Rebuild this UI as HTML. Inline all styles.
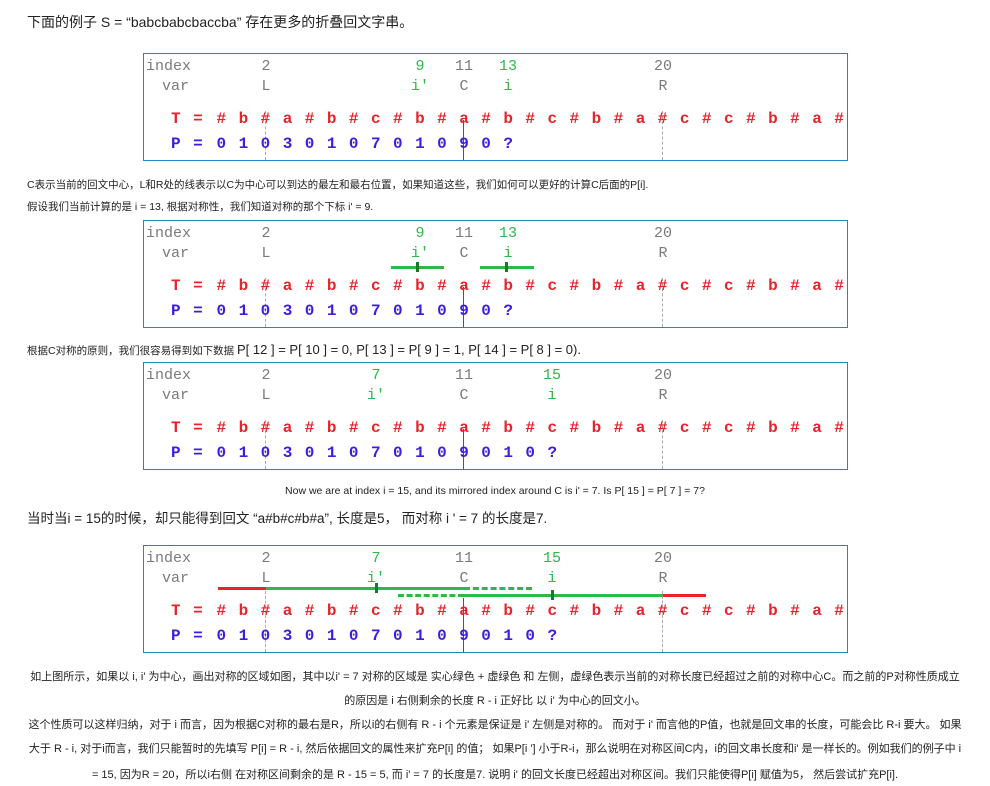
<!DOCTYPE html>
<html><head><meta charset="utf-8">
<style>
body{margin:0;background:#fff;width:990px;height:786px;position:relative;overflow:hidden;font-family:"Liberation Sans","Noto Sans CJK SC",sans-serif;color:#222}
.t{position:absolute;white-space:nowrap}
.box{position:absolute;left:143px;width:703px;height:106px;border:1px solid #1a8ac6}
.box span{position:absolute;white-space:nowrap}
.lab{font-family:"Liberation Mono",monospace;font-size:15px;color:#7a7a7a;line-height:20px}
.n{transform:translateX(-50%)}
.g{color:#2db84a}
.row{font-family:"Liberation Mono",monospace;font-weight:bold;font-size:16px;letter-spacing:1.43px;line-height:20px}
.T{color:#e8232a}.P{color:#3a1fe0}
.v{position:absolute;width:0}
.dash{border-left:1.5px dashed #aaa}
.sol{border-left:1px solid #555}
.ln{position:absolute;height:3px}
.sm{font-size:10.5px}
.bp{font-size:11px}
</style></head><body>

<div class="t" style="left:27px;top:12px;font-size:14px">下面的例子 S = “babcbabcbaccba” 存在更多的折叠回文字串。</div>

<!-- box 1 -->
<div class="box" style="top:53px">
<span class="lab" style="left:2px;top:3px">index</span>
<span class="lab" style="left:18px;top:23px">var</span>
<span class="lab n" style="left:122px;top:3px">2</span><span class="lab n" style="left:122px;top:23px">L</span>
<span class="lab n g" style="left:276px;top:3px">9</span><span class="lab n g" style="left:276px;top:23px">i'</span>
<span class="lab n" style="left:320px;top:3px">11</span><span class="lab n" style="left:320px;top:23px">C</span>
<span class="lab n g" style="left:364px;top:3px">13</span><span class="lab n g" style="left:364px;top:23px">i</span>
<span class="lab n" style="left:519px;top:3px">20</span><span class="lab n" style="left:519px;top:23px">R</span>
<div class="v dash" style="left:121px;top:57px;height:49px"></div>
<div class="v sol" style="left:319px;top:66px;height:40px"></div>
<div class="v dash" style="left:518px;top:57px;height:49px"></div>
<span class="row T" style="left:27px;top:55px">T =</span>
<span class="row T" style="left:72.5px;top:55px"># b # a # b # c # b # a # b # c # b # a # c # c # b # a #</span>
<span class="row P" style="left:27px;top:80px">P =</span>
<span class="row P" style="left:72.5px;top:80px">0 1 0 3 0 1 0 7 0 1 0 9 0 ?</span>
</div>

<div class="t sm" style="left:27px;top:177px">C表示当前的回文中心，L和R处的线表示以C为中心可以到达的最左和最右位置，如果知道这些，我们如何可以更好的计算C后面的P[i].</div>
<div class="t sm" style="left:27px;top:199px">假设我们当前计算的是 i = 13, 根据对称性，我们知道对称的那个下标 i' = 9.</div>

<!-- box 2 -->
<div class="box" style="top:220px">
<span class="lab" style="left:2px;top:3px">index</span>
<span class="lab" style="left:18px;top:23px">var</span>
<span class="lab n" style="left:122px;top:3px">2</span><span class="lab n" style="left:122px;top:23px">L</span>
<span class="lab n g" style="left:276px;top:3px">9</span><span class="lab n g" style="left:276px;top:23px">i'</span>
<span class="lab n" style="left:320px;top:3px">11</span><span class="lab n" style="left:320px;top:23px">C</span>
<span class="lab n g" style="left:364px;top:3px">13</span><span class="lab n g" style="left:364px;top:23px">i</span>
<span class="lab n" style="left:519px;top:3px">20</span><span class="lab n" style="left:519px;top:23px">R</span>
<div class="ln" style="left:247px;top:45px;width:53px;background:#2db84a"></div>
<div class="ln" style="left:272px;top:41px;width:3px;height:10px;background:#157a2a"></div>
<div class="ln" style="left:336px;top:45px;width:54px;background:#2db84a"></div>
<div class="ln" style="left:361px;top:41px;width:3px;height:10px;background:#157a2a"></div>
<div class="v dash" style="left:121px;top:57px;height:49px"></div>
<div class="v sol" style="left:319px;top:66px;height:40px"></div>
<div class="v dash" style="left:518px;top:57px;height:49px"></div>
<span class="row T" style="left:27px;top:55px">T =</span>
<span class="row T" style="left:72.5px;top:55px"># b # a # b # c # b # a # b # c # b # a # c # c # b # a #</span>
<span class="row P" style="left:27px;top:80px">P =</span>
<span class="row P" style="left:72.5px;top:80px">0 1 0 3 0 1 0 7 0 1 0 9 0 ?</span>
</div>

<div class="t" style="left:27px;top:342px;font-size:10.5px">根据C对称的原则，我们很容易得到如下数据 <span style="font-size:13px">P[ 12 ] = P[ 10 ] = 0, P[ 13 ] = P[ 9 ] = 1, P[ 14 ] = P[ 8 ] = 0).</span></div>

<!-- box 3 -->
<div class="box" style="top:362px">
<span class="lab" style="left:2px;top:3px">index</span>
<span class="lab" style="left:18px;top:23px">var</span>
<span class="lab n" style="left:122px;top:3px">2</span><span class="lab n" style="left:122px;top:23px">L</span>
<span class="lab n g" style="left:232px;top:3px">7</span><span class="lab n g" style="left:232px;top:23px">i'</span>
<span class="lab n" style="left:320px;top:3px">11</span><span class="lab n" style="left:320px;top:23px">C</span>
<span class="lab n g" style="left:408px;top:3px">15</span><span class="lab n g" style="left:408px;top:23px">i</span>
<span class="lab n" style="left:519px;top:3px">20</span><span class="lab n" style="left:519px;top:23px">R</span>
<div class="v dash" style="left:121px;top:57px;height:49px"></div>
<div class="v sol" style="left:319px;top:66px;height:40px"></div>
<div class="v dash" style="left:518px;top:57px;height:49px"></div>
<span class="row T" style="left:27px;top:55px">T =</span>
<span class="row T" style="left:72.5px;top:55px"># b # a # b # c # b # a # b # c # b # a # c # c # b # a #</span>
<span class="row P" style="left:27px;top:80px">P =</span>
<span class="row P" style="left:72.5px;top:80px">0 1 0 3 0 1 0 7 0 1 0 9 0 1 0 ?</span>
</div>

<div class="t sm" style="left:0;width:990px;text-align:center;top:485px">Now we are at index i = 15, and its mirrored index around C is i' = 7. Is P[ 15 ] = P[ 7 ] = 7?</div>
<div class="t" style="left:27px;top:507px;font-size:13.5px">当时当i = 15的时候，却只能得到回文 “a#b#c#b#a”, 长度是5， 而对称 i ' = 7 的长度是7.</div>

<!-- box 4 -->
<div class="box" style="top:545px">
<span class="lab" style="left:2px;top:3px">index</span>
<span class="lab" style="left:18px;top:23px">var</span>
<span class="lab n" style="left:122px;top:3px">2</span><span class="lab n" style="left:122px;top:23px">L</span>
<span class="lab n g" style="left:232px;top:3px">7</span><span class="lab n g" style="left:232px;top:23px">i'</span>
<span class="lab n" style="left:320px;top:3px">11</span><span class="lab n" style="left:320px;top:23px">C</span>
<span class="lab n g" style="left:408px;top:3px">15</span><span class="lab n g" style="left:408px;top:23px">i</span>
<span class="lab n" style="left:519px;top:3px">20</span><span class="lab n" style="left:519px;top:23px">R</span>
<div class="ln" style="left:74px;top:41px;width:48px;background:#e8232a"></div>
<div class="ln" style="left:122px;top:41px;width:198px;background:#2db84a"></div>
<div class="ln" style="left:231px;top:37px;width:3px;height:10px;background:#157a2a"></div>
<div class="ln" style="left:320px;top:41px;width:68px;height:0;border-top:3px dashed #2db84a"></div>
<div class="ln" style="left:254px;top:48px;width:66px;height:0;border-top:3px dashed #2db84a"></div>
<div class="ln" style="left:320px;top:48px;width:199px;background:#2db84a"></div>
<div class="ln" style="left:407px;top:44px;width:3px;height:10px;background:#157a2a"></div>
<div class="ln" style="left:519px;top:48px;width:43px;background:#e8232a"></div>
<div class="v dash" style="left:121px;top:45px;height:61px"></div>
<div class="v sol" style="left:319px;top:52px;height:54px"></div>
<div class="v dash" style="left:518px;top:45px;height:61px"></div>
<span class="row T" style="left:27px;top:55px">T =</span>
<span class="row T" style="left:72.5px;top:55px"># b # a # b # c # b # a # b # c # b # a # c # c # b # a #</span>
<span class="row P" style="left:27px;top:80px">P =</span>
<span class="row P" style="left:72.5px;top:80px">0 1 0 3 0 1 0 7 0 1 0 9 0 1 0 ?</span>
</div>

<div class="t bp" style="left:0;width:990px;text-align:center;top:668px">如上图所示，如果以 i, i' 为中心，画出对称的区域如图，其中以i' = 7 对称的区域是 实心绿色 + 虚绿色 和 左侧，虚绿色表示当前的对称长度已经超过之前的对称中心C。而之前的P对称性质成立</div>
<div class="t bp" style="left:0;width:990px;text-align:center;top:692px">的原因是 i 右侧剩余的长度 R - i 正好比 以 i' 为中心的回文小。</div>
<div class="t bp" style="left:0;width:990px;text-align:center;top:716px">这个性质可以这样归纳，对于 i 而言，因为根据C对称的最右是R，所以i的右侧有 R - i 个元素是保证是 i' 左侧是对称的。 而对于 i' 而言他的P值，也就是回文串的长度，可能会比 R-i 要大。 如果</div>
<div class="t bp" style="left:0;width:990px;text-align:center;top:740px">大于 R - i, 对于i而言，我们只能暂时的先填写 P[i] = R - i, 然后依据回文的属性来扩充P[i] 的值； 如果P[i '] 小于R-i，那么说明在对称区间C内，i的回文串长度和i' 是一样长的。例如我们的例子中 i</div>
<div class="t bp" style="left:0;width:990px;text-align:center;top:766px">= 15, 因为R = 20，所以i右侧 在对称区间剩余的是 R - 15 = 5, 而 i' = 7 的长度是7. 说明 i' 的回文长度已经超出对称区间。我们只能使得P[i] 赋值为5， 然后尝试扩充P[i].</div>

</body></html>
